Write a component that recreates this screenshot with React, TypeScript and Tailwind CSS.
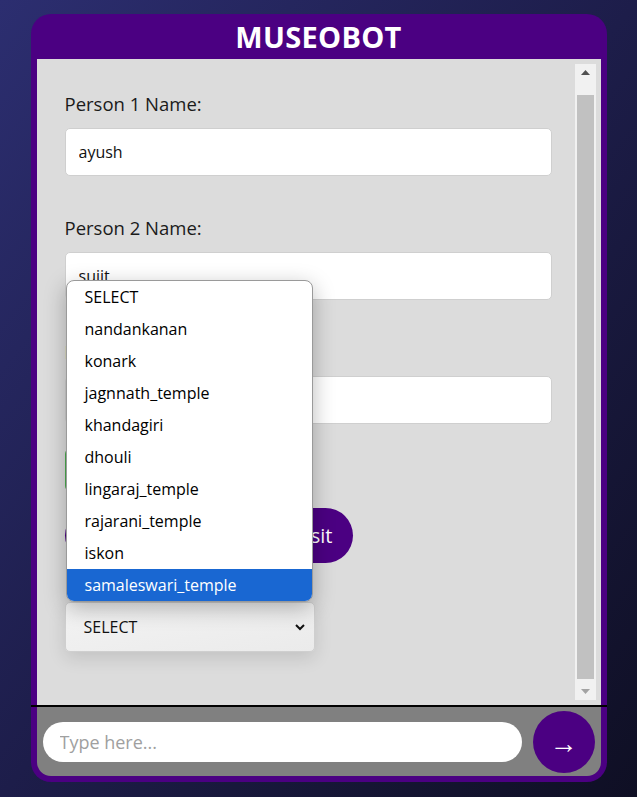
import React from 'react';

const places = [
  'SELECT',
  'nandankanan',
  'konark',
  'jagnnath_temple',
  'khandagiri',
  'dhouli',
  'lingaraj_temple',
  'rajarani_temple',
  'iskon',
  'samaleswari_temple',
];

const NameField: React.FC<{ label: string; value: string }> = ({ label, value }) => (
  <div className="mb-[40px]">
    <label className="block text-[18.5px] leading-[24px] text-[#1a1a1a] mb-[12px]">{label}</label>
    <input
      defaultValue={value}
      className="w-full h-[48px] rounded-[5px] border border-[#cfcfcf] bg-white px-[13px] text-[16px] text-[#111] outline-none"
    />
  </div>
);

const App: React.FC = () => {
  return (
    <div className="min-h-screen w-full bg-linear-to-br from-[#2c2e70] via-[#1d1d4a] to-[#0f0f24] flex justify-center pt-[14px] font-['Open_Sans',sans-serif]">
      <div className="w-[576px] h-[768px] rounded-[20px] bg-[#4b0082] flex flex-col overflow-hidden">
        {/* header */}
        <div className="h-[45px] flex items-center justify-center">
          <h1 className="text-white text-[29px] font-bold tracking-[0.3px] leading-none">MUSEOBOT</h1>
        </div>

        {/* chat body */}
        <div className="px-[6px]">
          <div className="h-[646px] bg-[#dcdcdc] p-[5px] flex">
            <div className="flex-1 overflow-hidden pt-[28px] px-[23px]">
              <NameField label="Person 1 Name:" value="ayush" />
              <NameField label="Person 2 Name:" value="sujit" />
              <NameField label="Person 3 Name:" value="" />

              <div className="-mt-[16px] flex flex-col items-start">
                <button className="h-[44px] w-[200px] rounded-[6px] bg-[#4caf50] text-white text-[18px]">Calculate</button>
                <button className="mt-[16px] h-[55px] w-[288px] rounded-full bg-[#4b0082] text-white text-[20px] flex items-center justify-end pr-[20px]">
                  Book Your Visit
                </button>

                <div className="relative mt-[39px]">
                  {/* open select menu */}
                  <div className="absolute bottom-full left-[1px] w-[247px] bg-white border border-[#9a9a9a] rounded-[8px] overflow-hidden shadow-[0_6px_22px_rgba(0,0,0,0.28)] z-10">
                    {places.map((p, i) => (
                      <div
                        key={p}
                        className={`h-[32px] flex items-center pl-[18px] text-[16px] ${
                          i === places.length - 1 ? 'bg-[#1967d2] text-white' : 'text-black'
                        }`}
                      >
                        {p}
                      </div>
                    ))}
                  </div>
                  <div className="w-[250px] h-[50px] rounded-[5px] border border-[#cfcfcf] bg-linear-to-br from-[#f3f3f3] to-[#ebebeb] shadow-[0_6px_18px_rgba(0,0,0,0.12)] flex items-center justify-between pl-[18px] pr-[8px] text-[16px] text-[#111]">
                    <span>SELECT</span>
                    <svg width="12" height="12" viewBox="0 0 12 12" fill="none">
                      <path d="M2 4l4 4 4-4" stroke="#111" strokeWidth="2" />
                    </svg>
                  </div>
                </div>
              </div>
            </div>

            {/* scrollbar */}
            <div className="w-[21px] bg-[#f1f1f1] flex flex-col items-center">
              <div className="h-[17px] flex items-center justify-center">
                <svg width="9" height="5" viewBox="0 0 9 5">
                  <path d="M0 5L4.5 0L9 5z" fill="#505050" />
                </svg>
              </div>
              <div className="flex-1 w-full px-[2px] pt-[14px] pb-[4px]">
                <div className="h-full bg-[#c1c1c1]" />
              </div>
              <div className="h-[17px] flex items-center justify-center">
                <svg width="9" height="5" viewBox="0 0 9 5">
                  <path d="M0 0L4.5 5L9 0z" fill="#a3a3a3" />
                </svg>
              </div>
            </div>
          </div>
        </div>

        <div className="h-[2px] bg-black" />

        {/* input bar */}
        <div className="px-[6px] pb-[6px]">
          <div className="h-[69px] bg-[#808080] rounded-b-[14px] flex items-center px-[6px] gap-[11px]">
            <input
              placeholder="Type here..."
              className="flex-1 h-[40px] rounded-full bg-white px-[17px] text-[18px] text-[#111] placeholder:text-[#a0a0a0] outline-none"
            />
            <button className="w-[62px] h-[62px] rounded-full bg-[#4b0082] text-white text-[28px] flex items-center justify-center leading-none">
              →
            </button>
          </div>
        </div>
      </div>
    </div>
  );
};

export default App;
